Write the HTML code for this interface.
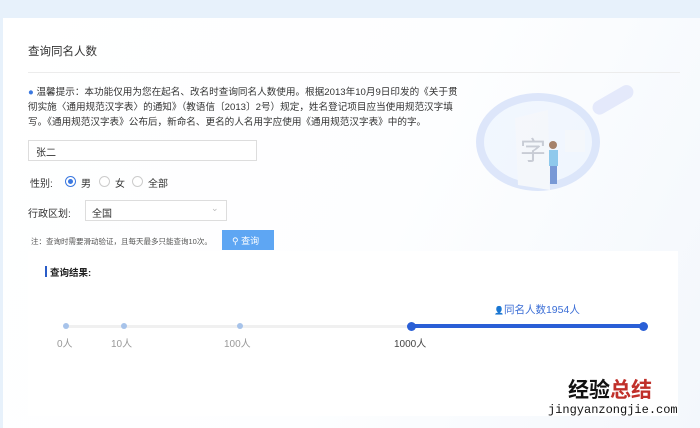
<!DOCTYPE html>
<html><head><meta charset="utf-8"><style>
*{margin:0;padding:0;box-sizing:border-box}
body{width:700px;height:428px;overflow:hidden;background:#e7f1fb;font-family:"Liberation Sans","Noto Sans CJK SC",sans-serif;color:#333;position:relative}
.a{position:absolute}
.card{left:3px;top:18px;width:697px;height:410px;background:linear-gradient(115deg,#fff 0%,#fdfeff 55%,#f3f7fc 100%)}
.t{font-size:11px;white-space:nowrap}
</style></head><body>
<div class="a card"></div>
<div class="a t" style="left:28px;top:43px;font-size:11.5px;color:#333">查询同名人数</div>
<div class="a" style="left:28px;top:72px;width:652px;height:1px;background:#ececec"></div>
<div class="a t" style="left:28px;top:85px;font-size:9.6px;line-height:15px;color:#333;width:438px;white-space:normal">
<span style="color:#3a78e0">●</span> 温馨提示：本功能仅用为您在起名、改名时查询同名人数使用。根据2013年10月9日印发的《关于贯彻实施〈通用规范汉字表〉的通知》（教语信〔2013〕2号）规定，姓名登记项目应当使用规范汉字填写。《通用规范汉字表》公布后，新命名、更名的人名用字应使用《通用规范汉字表》中的字。</div>
<div class="a" style="left:28px;top:140px;width:229px;height:21px;background:#fff;border:1px solid #ddd"></div>
<div class="a t" style="left:36px;top:144px;font-size:10px">张二</div>
<div class="a t" style="left:30px;top:175px;font-size:10px">性别:</div>
<div class="a" style="left:65px;top:176px;width:11px;height:11px;border-radius:50%;border:1px solid #3a78e0;background:#fff"></div>
<div class="a" style="left:68px;top:179px;width:5px;height:5px;border-radius:50%;background:#3a78e0"></div>
<div class="a t" style="left:81px;top:175px;font-size:10px">男</div>
<div class="a" style="left:99px;top:176px;width:11px;height:11px;border-radius:50%;border:1px solid #ccc;background:#fff"></div>
<div class="a t" style="left:115px;top:175px;font-size:10px">女</div>
<div class="a" style="left:132px;top:176px;width:11px;height:11px;border-radius:50%;border:1px solid #ccc;background:#fff"></div>
<div class="a t" style="left:148px;top:175px;font-size:10px">全部</div>
<div class="a t" style="left:28px;top:205px;font-size:10px">行政区划:</div>
<div class="a" style="left:85px;top:200px;width:142px;height:21px;background:#fff;border:1px solid #ddd"></div>
<div class="a t" style="left:92px;top:205px;font-size:10px">全国</div>
<div class="a t" style="left:211px;top:203px;font-size:9px;color:#bbb">⌄</div>
<div class="a t" style="left:31px;top:236px;font-size:7.5px;color:#555">注：查询时需要滑动验证，且每天最多只能查询10次。</div>
<div class="a" style="left:222px;top:230px;width:52px;height:20px;background:#5ea6f3"></div>
<div class="a t" style="left:232px;top:234px;font-size:9px;color:#fff">⚲ 查询</div>
<div class="a" style="left:28px;top:251px;width:650px;height:165px;background:#fff"></div>
<div class="a" style="left:45px;top:266px;width:2px;height:11px;background:#2a5cc8"></div>
<div class="a t" style="left:50px;top:265px;font-size:9.5px;font-weight:bold;color:#222">查询结果:</div>
<div class="a" style="left:66px;top:325px;width:345px;height:3px;background:#f0f0f0"></div>
<div class="a" style="left:411px;top:324px;width:233px;height:4px;background:#2a5fd6"></div>
<div class="a" style="left:63px;top:323px;width:6px;height:6px;border-radius:50%;background:#a7c3ea"></div>
<div class="a" style="left:121px;top:323px;width:6px;height:6px;border-radius:50%;background:#a7c3ea"></div>
<div class="a" style="left:237px;top:323px;width:6px;height:6px;border-radius:50%;background:#a7c3ea"></div>
<div class="a" style="left:407px;top:322px;width:9px;height:9px;border-radius:50%;background:#2a5fd6"></div>
<div class="a" style="left:639px;top:322px;width:9px;height:9px;border-radius:50%;background:#2a5fd6"></div>
<div class="a t" style="left:57px;top:335px;font-size:10px;color:#999">0人</div>
<div class="a t" style="left:111px;top:335px;font-size:10px;color:#999">10人</div>
<div class="a t" style="left:224px;top:335px;font-size:10px;color:#999">100人</div>
<div class="a t" style="left:394px;top:335px;font-size:10px;color:#444">1000人</div>
<div class="a t" style="left:494px;top:302px;font-size:10.5px;color:#3b6ed6"><span style="font-size:8px;color:#8aa8e0">👤</span>同名人数1954人</div>
<div class="a t" style="left:568px;top:374px;font-size:21px;font-weight:bold;color:#111">经验<span style="color:#c0302a">总结</span></div>
<div class="a t" style="left:548px;top:403px;font-size:12px;color:#111;font-family:'Liberation Mono',monospace">jingyanzongjie.com</div>
<svg class="a" style="left:470px;top:80px;opacity:.75" width="200" height="130" viewBox="0 0 200 130">
<ellipse cx="68" cy="62" rx="58" ry="45" fill="#eef5ff" stroke="#d3dff9" stroke-width="8"/>
<rect x="120" y="25" width="45" height="14" rx="7" transform="rotate(-30 120 25)" fill="#dde3fa"/>
<polygon points="45,38 78,30 80,110 48,105" fill="#f3f6fb"/>
<text x="50" y="80" font-size="26" fill="#b8bcc8" font-family="Noto Sans CJK SC">字</text>
<rect x="95" y="50" width="20" height="22" fill="#f3f6fb"/>
<rect x="80" y="84" width="7" height="20" fill="#4e79c9"/>
<rect x="79" y="70" width="9" height="16" fill="#6cb8e6"/>
<circle cx="83" cy="65" r="4" fill="#8a5a3a"/>
</svg>
</body></html>
